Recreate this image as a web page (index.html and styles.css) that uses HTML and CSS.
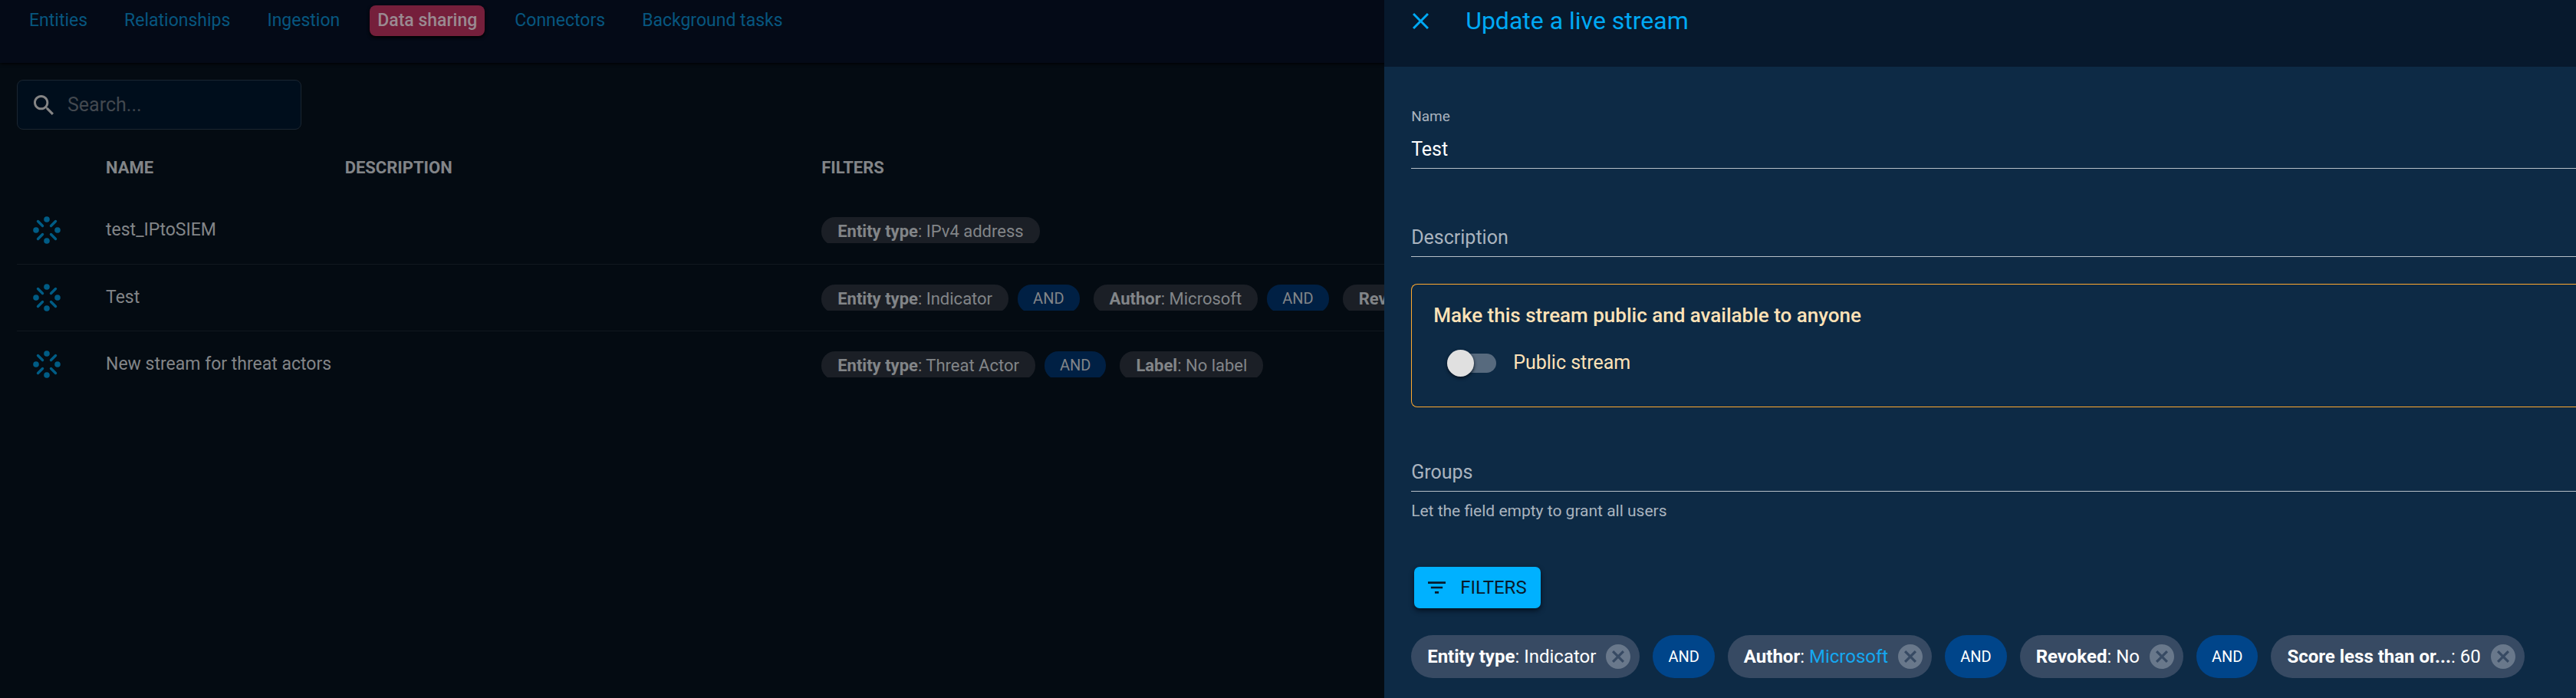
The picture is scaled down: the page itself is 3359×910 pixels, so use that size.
FILE: index.html
```
<!DOCTYPE html>
<html lang="en">
<head>
<meta charset="utf-8">
<title>Data sharing - Live streams</title>
<link rel="stylesheet" href="styles.css">
</head>
<body>
<svg class="defs" aria-hidden="true">
  <symbol id="stream" viewBox="0 0 36 36">
    <g fill="currentColor"><circle cx="18" cy="4" r="3.800"/><circle cx="18" cy="32" r="3.800"/><circle cx="4" cy="18" r="3.800"/><circle cx="32" cy="18" r="3.800"/></g>
    <path d="M6.500 6.500 12.500 12.500M29.500 6.500 23.500 12.500M6.500 29.500 12.500 23.500M29.500 29.500 23.500 23.500" stroke="currentColor" stroke-width="3.400" stroke-linecap="round"/>
  </symbol>
  <symbol id="cancel" viewBox="2 2 20 20">
    <path fill="currentColor" d="M12 2C6.470 2 2 6.470 2 12s4.470 10 10 10 10-4.470 10-10S17.530 2 12 2zm5 13.590L15.590 17 12 13.410 8.410 17 7 15.590 10.590 12 7 8.410 8.410 7 12 10.590 15.590 7 17 8.410 13.410 12 17 15.590z"/>
  </symbol>
</svg>

<main class="page">
  <nav class="tabs">
    <a href="#">Entities</a>
    <a href="#">Relationships</a>
    <a href="#">Ingestion</a>
    <a href="#" class="active">Data sharing</a>
    <a href="#">Connectors</a>
    <a href="#">Background tasks</a>
  </nav>
  <div class="content">
    <div class="search">
      <svg viewBox="3 3 17.490 17.490" aria-hidden="true"><path fill="currentColor" d="M15.500 14h-.79l-.28-.27C15.410 12.590 16 11.110 16 9.500 16 5.910 13.090 3 9.500 3S3 5.910 3 9.500 5.910 16 9.500 16c1.610 0 3.090-.59 4.230-1.570l.27.28v.79l5 4.990L20.490 19l-4.990-5zm-6 0C7.010 14 5 11.990 5 9.500S7.010 5 9.500 5 14 7.010 14 9.500 11.990 14 9.500 14z"/></svg>
      <input type="search" placeholder="Search..." aria-label="Search">
    </div>
    <table class="streams">
      <thead>
        <tr><th class="col-icon"></th><th class="col-name">NAME</th><th class="col-desc">DESCRIPTION</th><th>FILTERS</th></tr>
      </thead>
      <tbody>
        <tr>
          <td class="icon"><svg><use href="#stream"/></svg></td><td>test_IPtoSIEM</td><td></td>
          <td><div class="tags"><span class="tag"><b>Entity type</b>: IPv4 address</span></div></td>
        </tr>
        <tr>
          <td class="icon"><svg><use href="#stream"/></svg></td><td>Test</td><td></td>
          <td><div class="tags"><span class="tag"><b>Entity type</b>: Indicator</span><span class="tag and">AND</span><span class="tag"><b>Author</b>: Microsoft</span><span class="tag and">AND</span><span class="tag"><b>Revoked</b>: No</span></div></td>
        </tr>
        <tr>
          <td class="icon"><svg><use href="#stream"/></svg></td><td>New stream for threat actors</td><td></td>
          <td><div class="tags"><span class="tag"><b>Entity type</b>: Threat Actor</span><span class="tag and">AND</span><span class="tag"><b>Label</b>: No label</span></div></td>
        </tr>
      </tbody>
    </table>
  </div>
</main>

<aside class="drawer">
  <header class="drawer-head">
    <button type="button" class="close" aria-label="Close"><svg viewBox="5 5 14 14"><path fill="currentColor" d="M19 6.410 17.590 5 12 10.590 6.410 5 5 6.410 10.590 12 5 17.590 6.410 19 12 13.410 17.590 19 19 17.590 13.410 12z"/></svg></button>
    <h1>Update a live stream</h1>
  </header>
  <form class="form">
    <label class="label" for="name">Name</label>
    <input class="field" id="name" type="text" value="Test">
    <input class="field description" type="text" placeholder="Description" aria-label="Description">
    <section class="notice">
      <h2>Make this stream public and available to anyone</h2>
      <label class="switch"><input type="checkbox"><span>Public stream</span></label>
    </section>
    <input class="field groups" type="text" placeholder="Groups" aria-label="Groups" aria-describedby="groups-help">
    <p class="help" id="groups-help">Let the field empty to grant all users</p>
    <button type="button" class="filters"><svg viewBox="3 6 18 12" aria-hidden="true"><path fill="currentColor" d="M10 18h4v-2h-4v2zM3 6v2h18V6H3zm3 7h12v-2H6v2z"/></svg>FILTERS</button>
    <div class="chips">
      <span class="chip"><span><b>Entity type</b>: Indicator</span><button type="button" aria-label="Remove entity type"><svg><use href="#cancel"/></svg></button></span>
      <span class="chip and">AND</span>
      <span class="chip"><span><b>Author</b>: <a href="#">Microsoft</a></span><button type="button" aria-label="Remove author"><svg><use href="#cancel"/></svg></button></span>
      <span class="chip and">AND</span>
      <span class="chip"><span><b>Revoked</b>: No</span><button type="button" aria-label="Remove revoked"><svg><use href="#cancel"/></svg></button></span>
      <span class="chip and">AND</span>
      <span class="chip"><span><b>Score less than or...</b>: 60</span><button type="button" aria-label="Remove score"><svg><use href="#cancel"/></svg></button></span>
    </div>
  </form>
</aside>
</body>
</html>
```
FILE: styles.css
```
* { box-sizing: border-box; }
body {
  margin: 0;
  min-height: 100vh;
  overflow: hidden;
  background: #040b12;
  color: #828588;
  font: 23px/32px Roboto, "Liberation Sans", sans-serif;
}
a { color: inherit; text-decoration: none; }
button { border: 0; padding: 0; background: none; color: inherit; font: inherit; cursor: pointer; }
input { font: inherit; color: inherit; }
svg { display: block; }
.defs { position: absolute; width: 0; height: 0; }

/* Top tabs */
.tabs {
  display: flex;
  align-items: center;
  gap: 48px;
  padding: 7px 38px 35px;
  background: #040a17;
  color: #07567f;
  box-shadow: 0 1px 4px #000;
}
.tabs a { line-height: 40px; }
.tabs .active {
  margin: 0 -9px;
  padding: 0 10px;
  border-radius: 8px;
  background: #751f3b;
  color: #9a8a91;
  font-weight: 500;
  box-shadow: 0 2px 4px #000;
}

/* Stream list */
.content { padding: 22px; }
.search {
  display: flex;
  align-items: center;
  gap: 18px;
  width: 371px;
  height: 65px;
  padding: 0 21px;
  border: 1px solid #1b2631;
  border-radius: 8px;
  background: #000e1c;
  font-size: 25px;
}
.search svg { flex: none; width: 26px; height: 26px; color: #858585; }
.search input { width: 100%; padding: 0; border: 0; outline: 0; background: none; }
.search input::placeholder { color: #42484f; opacity: 1; }
.streams { width: 100%; margin-top: 12px; border-collapse: collapse; table-layout: fixed; }
.streams th { height: 76px; padding: 0; text-align: left; font-size: 22px; font-weight: 700; }
.streams td { height: 87px; padding: 0; }
.streams tbody tr + tr { border-top: 1px solid #11181f; }
.col-icon { width: 3.5%; }
.col-name { width: 9.4%; }
.col-desc { width: 18.75%; }
.icon svg { width: 36px; height: 36px; margin-left: 21px; color: #005c85; }
.tags { display: flex; height: 34px; overflow: hidden; }
.tag {
  flex: none;
  height: 37px;
  margin-right: 12px;
  padding: 0 21px;
  border-radius: 18px;
  background: #1b1f26;
  font-size: 22px;
  line-height: 37px;
}
.tag.and { margin-right: 18px; padding: 0 20px; background: #002044; font-size: 20px; }

/* Drawer */
.drawer {
  position: fixed;
  top: 0;
  right: 0;
  bottom: 0;
  width: 46.26%;
  overflow: hidden;
  background: #0d2a45;
  color: #fff;
  font-size: 25px;
}
.drawer-head {
  display: flex;
  align-items: center;
  gap: 48px;
  padding: 0 0 33px 37px;
  background: #07192d;
  color: #00a9f4;
}
.close svg { width: 21px; height: 21px; }
.drawer-head h1 { margin: 0; font-size: 32px; line-height: 54px; font-weight: 400; }
.form { padding: 53px 0 0 35px; }
.label { display: block; color: #aab4bf; font-size: 19px; line-height: 24px; }
.field {
  display: block;
  width: 100%;
  height: 50px;
  margin-top: 6px;
  padding: 0;
  border: 0;
  border-bottom: 1px solid #b6bfc7;
  border-radius: 0;
  outline: 0;
  background: none;
}
.field::placeholder { color: #aab4bf; opacity: 1; }
.description { margin-top: 65px; }
.groups { margin-top: 60px; }
.notice {
  margin-top: 35px;
  padding: 24px 28px 39px;
  border: 1px solid #ffa92f;
  border-right: 0;
  border-radius: 8px 0 0 8px;
  color: #ffe2b7;
}
.notice h2 { margin: 0 0 28px; font-size: 26px; line-height: 32px; font-weight: 500; }
.switch { display: flex; align-items: center; gap: 22px; height: 36px; padding-left: 18px; }
.switch input {
  appearance: none;
  display: flex;
  align-items: center;
  width: 64px;
  height: 25px;
  margin: 0;
  border-radius: 13px;
  background: #576a7e;
}
.switch input::before {
  content: "";
  width: 35px;
  height: 35px;
  border-radius: 50%;
  background: #e0e0e0;
  box-shadow: 0 2px 4px #04111f;
}
.switch input:checked::before { margin-left: auto; }
.help { margin: 11px 0 0; color: #aab4bf; font-size: 21px; line-height: 28px; }
.filters {
  display: flex;
  align-items: center;
  gap: 19px;
  height: 54px;
  margin: 59px 0 0 4px;
  padding: 0 18px;
  border-radius: 7px;
  background: #00b1ff;
  color: #08192a;
  font-size: 24px;
  box-shadow: 0 3px 6px #04111f;
}
.filters svg { width: 23px; height: 16px; }
.chips { display: flex; gap: 17px; margin-top: 35px; }
.chip {
  display: flex;
  align-items: center;
  gap: 13px;
  height: 56px;
  padding: 0 12px 0 21px;
  border-radius: 28px;
  background: #374a63;
  font-size: 24px;
  white-space: nowrap;
}
.chip a { color: #15a8f0; }
.chip button, .chip svg { width: 32px; height: 32px; color: #69788b; }
.chip.and { padding: 0 20px; background: #00458a; font-size: 20px; }
```
